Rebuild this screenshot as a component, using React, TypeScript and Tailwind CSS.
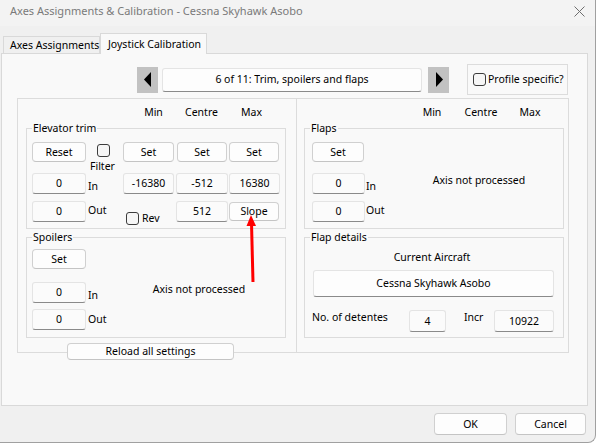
import React from "react";

type BoxProps = { className?: string; children?: React.ReactNode };

function Btn({ className = "", children }: BoxProps) {
  return (
    <div
      className={`flex items-center justify-center whitespace-nowrap bg-[#fdfdfd] border border-[#d0d0d0] border-b-[#c4c4c4] rounded-[4px] leading-none ${className}`}
    >
      {children}
    </div>
  );
}

function Field({ className = "", children }: BoxProps) {
  return (
    <div
      className={`flex items-center justify-center whitespace-nowrap bg-[#fbfbfb] border border-[#e4e4e4] border-b-[#8a8a8a] rounded-[3px] leading-none ${className}`}
    >
      {children}
    </div>
  );
}

function Check({ className = "" }: { className?: string }) {
  return (
    <span
      className={`block w-[13px] h-[13px] shrink-0 border border-[#3c3c3c] rounded-[3px] bg-[#f6f6f6] ${className}`}
    />
  );
}

function Group({
  label,
  className = "",
  children,
}: BoxProps & { label: string }) {
  return (
    <div className={`relative border border-[#dcdcdc] w-[260px] h-[101px] ${className}`}>
      <span className="absolute -top-[8px] left-[5px] px-[1px] bg-[#f9f9f9] leading-[14px] whitespace-nowrap">
        {label}
      </span>
      {children}
    </div>
  );
}

function Arrow({ dir }: { dir: "left" | "right" }) {
  return (
    <div className="w-[21px] h-[26px] bg-[#c2c2c2] flex items-center justify-center">
      <svg width="8" height="15" viewBox="0 0 8 15">
        {dir === "left" ? (
          <polygon points="0,7.5 7,0 7,15" fill="#000" />
        ) : (
          <polygon points="1,0 8,7.5 1,15" fill="#000" />
        )}
      </svg>
    </div>
  );
}

export default function App() {
  return (
    <div className="w-[597px] h-[444px] bg-white font-['Noto_Sans',sans-serif] text-[10.5px] text-black whitespace-nowrap">
      <div className="relative w-[596px] h-[443px] bg-[#f0f0f0] border-r border-b border-[#a0a0a0] rounded-br-[8px] overflow-hidden">
        {/* title bar */}
        <div className="h-[26px] bg-[#f3f3f3] flex items-start justify-between pl-[10px] pr-[10px] pt-[3px]">
          <span className="text-[11px] leading-[16px] text-[#7a7a7a]">
            Axes Assignments &amp; Calibration - Cessna Skyhawk Asobo
          </span>
          <svg width="11" height="11" viewBox="0 0 11 11" className="mt-[3px]">
            <line x1="0.5" y1="0.5" x2="10.5" y2="10.5" stroke="#6e6e6e" strokeWidth="1" />
            <line x1="10.5" y1="0.5" x2="0.5" y2="10.5" stroke="#6e6e6e" strokeWidth="1" />
          </svg>
        </div>

        {/* tabs */}
        <div className="mt-[7px] h-[21px] flex items-end pl-[3px] relative z-10 -mb-px">
          <div className="h-[17px] w-[97px] mb-px border border-b-0 border-[#d9d9d9] bg-[#f0f0f0] flex items-center pl-[6px] leading-none">
            Axes Assignments
          </div>
          <div className="h-[21px] w-[107px] border border-b-0 border-[#d9d9d9] bg-[#f9f9f9] flex items-center pl-[7px] leading-none">
            Joystick Calibration
          </div>
        </div>

        {/* tab panel */}
        <div className="ml-[1px] w-[587px] h-[353px] border border-[#d9d9d9] bg-[#f9f9f9]">
          <div className="pt-[10px] pl-[135px] h-[41px] flex items-start">
            <div className="h-[31px] flex items-center">
              <Arrow dir="left" />
              <Field className="ml-[4px] w-[260px] h-[24px] bg-[#fdfdfd]">
                6 of 11: Trim, spoilers and flaps
              </Field>
              <div className="ml-[6px]">
                <Arrow dir="right" />
              </div>
              <div className="ml-[18px] w-[101px] h-[31px] border border-[#dcdcdc] flex items-center pl-[5px] gap-[2px]">
                <Check />
                <span className="leading-none">Profile specific?</span>
              </div>
            </div>
          </div>

          <div className="mt-[3px] pl-[15px] flex">
            {/* left panel */}
            <div className="w-[280px] h-[255px] border border-[#dcdcdc]">
              <div className="h-[29px] pt-[5px] flex leading-[16px]">
                <div className="w-[112px]" />
                <div className="w-[47px] text-center">Min</div>
                <div className="w-[49px] text-center">Centre</div>
                <div className="w-[51px] text-center">Max</div>
              </div>

              <Group label="Elevator trim" className="ml-[8px]">
                <div className="flex pt-[13px] pl-[5px]">
                  <div className="w-[54px] flex flex-col">
                    <Btn className="h-[20px]">Reset</Btn>
                    <Field className="mt-[11px] h-[21px]">0</Field>
                    <Field className="mt-[7px] h-[21px]">0</Field>
                  </div>
                  <div className="w-[37px] flex flex-col leading-[14px]">
                    <Check className="ml-[11px] mt-[2px]" />
                    <span className="ml-[4px] mt-[2px]">Filter</span>
                    <span className="ml-[2px] mt-[6px]">In</span>
                    <span className="ml-[2px] mt-[10px]">Out</span>
                  </div>
                  <div className="w-[52px] flex flex-col">
                    <Btn className="w-[51px] h-[20px]">Set</Btn>
                    <Field className="mt-[11px] w-[51px] h-[21px]">-16380</Field>
                    <div className="mt-[18px] flex items-center pl-[3px] gap-[3px]">
                      <Check className="w-[12px] h-[12px]" />
                      <span className="leading-none">Rev</span>
                    </div>
                  </div>
                  <div className="ml-[1px] w-[52px] flex flex-col">
                    <Btn className="ml-[1px] w-[50px] h-[20px]">Set</Btn>
                    <Field className="mt-[11px] h-[21px]">-512</Field>
                    <Field className="mt-[7px] h-[21px]">512</Field>
                  </div>
                  <div className="ml-[1px] w-[52px] flex flex-col">
                    <Btn className="w-[50px] h-[20px]">Set</Btn>
                    <Field className="mt-[11px] w-[51px] h-[21px]">16380</Field>
                    <Btn className="mt-[8px] w-[50px] h-[19px]">Slope</Btn>
                  </div>
                </div>
              </Group>

              <Group label="Spoilers" className="ml-[8px] mt-[8px]">
                <div className="flex pt-[11px] pl-[5px]">
                  <div className="w-[54px] flex flex-col">
                    <Btn className="h-[20px]">Set</Btn>
                    <Field className="mt-[13px] h-[21px]">0</Field>
                    <Field className="mt-[6px] h-[21px]">0</Field>
                  </div>
                  <div className="w-[37px] flex flex-col leading-[14px]">
                    <span className="ml-[2px] mt-[39px]">In</span>
                    <span className="ml-[2px] mt-[10px]">Out</span>
                  </div>
                  <div className="flex-1 pr-[10px] pt-[33px] text-center leading-[14px]">
                    Axis not processed
                  </div>
                </div>
              </Group>

              <Btn className="relative mt-[5px] ml-[49px] w-[167px] h-[17px]">
                Reload all settings
              </Btn>
            </div>

            {/* right panel */}
            <div className="-ml-px w-[273px] h-[255px] border border-[#dcdcdc]">
              <div className="h-[29px] pt-[5px] flex leading-[16px]">
                <div className="w-[111px]" />
                <div className="w-[48px] text-center">Min</div>
                <div className="w-[50px] text-center">Centre</div>
                <div className="w-[48px] text-center">Max</div>
              </div>

              <Group label="Flaps" className="ml-[7px]">
                <div className="flex pt-[13px] pl-[7px]">
                  <div className="w-[53px] flex flex-col">
                    <Btn className="w-[52px] h-[20px]">Set</Btn>
                    <Field className="mt-[11px] h-[21px]">0</Field>
                    <Field className="mt-[7px] h-[21px]">0</Field>
                  </div>
                  <div className="w-[30px] flex flex-col leading-[14px]">
                    <span className="ml-[1px] mt-[37px]">In</span>
                    <span className="ml-[1px] mt-[10px]">Out</span>
                  </div>
                  <div className="flex-1 pt-[31px] text-center leading-[14px]">
                    Axis not processed
                  </div>
                </div>
              </Group>

              <Group label="Flap details" className="ml-[7px] mt-[8px]">
                <div className="pt-[12px] pr-[4px] text-center leading-[14px]">
                  Current Aircraft
                </div>
                <Field className="mt-[6px] ml-[8px] w-[241px] h-[27px] bg-[#fdfdfd]">
                  Cessna Skyhawk Asobo
                </Field>
                <div className="mt-[13px] pl-[7px] flex items-start leading-[14px]">
                  <span className="w-[97px]">No. of detentes</span>
                  <Field className="w-[37px] h-[22px]">4</Field>
                  <span className="ml-[18px] w-[30px]">Incr</span>
                  <Field className="w-[60px] h-[22px]">10922</Field>
                </div>
              </Group>
            </div>
          </div>
        </div>

        {/* dialog buttons */}
        <div className="mt-[7px] flex justify-end pr-[9px] gap-[8px]">
          <Btn className="w-[73px] h-[22px]">OK</Btn>
          <Btn className="w-[71px] h-[22px]">Cancel</Btn>
        </div>

        {/* annotation arrow */}
        <svg
          className="absolute left-0 top-0 pointer-events-none"
          width="597"
          height="444"
          viewBox="0 0 597 444"
        >
          <line x1="253" y1="282" x2="251.5" y2="223" stroke="#ff0000" strokeWidth="3" />
          <polygon points="246.5,226 251,215 256,226" fill="#ff0000" />
        </svg>
      </div>
    </div>
  );
}
